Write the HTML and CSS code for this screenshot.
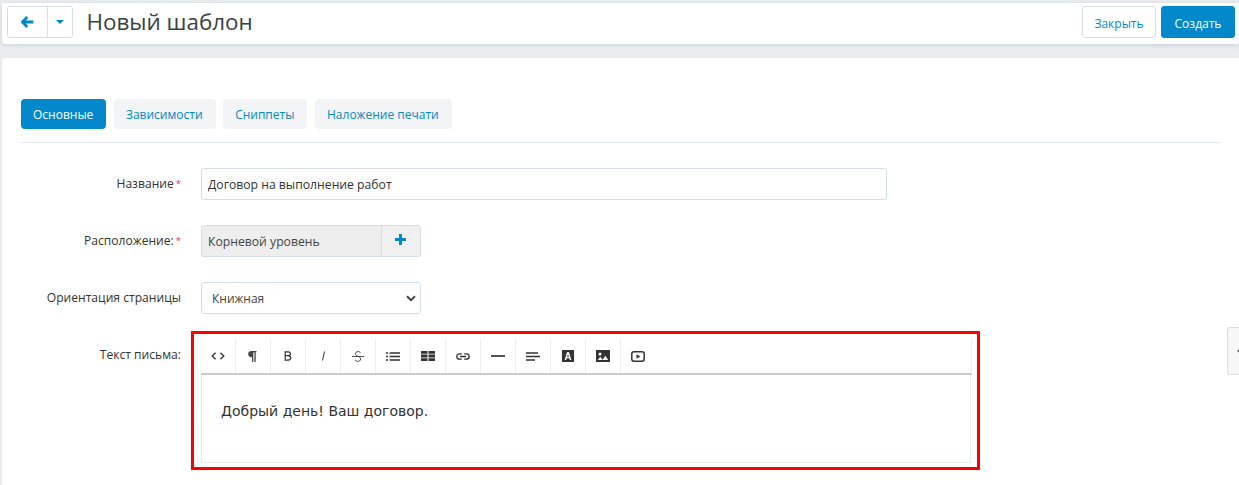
FILE: index.html
```html
<!DOCTYPE html>
<html lang="ru">
<head>
<meta charset="utf-8">
<title>Новый шаблон</title>
<link rel="stylesheet" href="styles.css">
</head>
<body>
<header class="topbar">
  <div class="back-group">
    <button class="back-btn back-main" type="button" aria-label="Назад">
      <svg width="13" height="12" viewBox="0 0 13 12"><path d="M6.200 1 1.400 6l4.800 5M2 6h10.400" fill="none" stroke="#0388cc" stroke-width="2.800"/></svg>
    </button>
    <button class="back-btn back-caret" type="button" aria-label="Ещё">
      <svg width="8" height="4" viewBox="0 0 8 4"><path d="M0 0h8L4 4z" fill="#0388cc"/></svg>
    </button>
  </div>
  <h1 class="title">Новый шаблон</h1>
  <div class="actions">
    <button class="btn btn-light" type="button">Закрыть</button>
    <button class="btn btn-primary" type="button">Создать</button>
  </div>
</header>

<main class="card">
  <nav class="tabs">
    <a class="tab tab-active">Основные</a>
    <a class="tab">Зависимости</a>
    <a class="tab">Сниппеты</a>
    <a class="tab">Наложение печати</a>
  </nav>

  <form class="form">
    <div class="row">
      <label class="label">Название<span class="req">*</span></label>
      <input class="input input-name" type="text" value="Договор на выполнение работ">
    </div>
    <div class="row">
      <label class="label">Расположение:<span class="req">*</span></label>
      <div class="picker">
        <span class="picker-value">Корневой уровень</span>
        <button class="picker-add" type="button" aria-label="Добавить">
          <svg width="11" height="11" viewBox="0 0 11 11"><path d="M5.500 0v11M0 5.500h11" stroke="#0388cc" stroke-width="3"/></svg>
        </button>
      </div>
    </div>
    <div class="row">
      <label class="label">Ориентация страницы</label>
      <div class="select">
        <span>Книжная</span>
        <svg width="10" height="7" viewBox="0 0 10 7"><path d="M1 1.200 5 5.200l4-4" fill="none" stroke="#444" stroke-width="2"/></svg>
      </div>
    </div>
    <div class="row row-editor">
      <label class="label">Текст письма:</label>
      <div class="editor">
        <div class="toolbar">
          <span class="tool"><svg width="14" height="8" viewBox="0 0 14 8"><path d="M4.600 .8 1.200 4l3.400 3.200M9.400 .8 12.800 4 9.400 7.200" fill="none" stroke="#333" stroke-width="1.300"/></svg></span>
          <span class="tool tool-shift"><svg width="9" height="11" viewBox="0 0 9 11"><path d="M8.500 0H3.300a3.100 3.100 0 0 0 0 6.200H4V11h1.300V1.300h1.100V11h1.300V1.300h.8z" fill="#444"/></svg></span>
          <span class="tool tool-shift"><svg width="8" height="10" viewBox="0 0 8 10"><path d="M1.200 .8h2.900c1.500 0 2.300.8 2.300 2 0 1.100-.8 1.800-2.300 1.900 1.600 0 2.600.8 2.600 2.100 0 1.400-1 2.300-2.600 2.300H1.200zM1.200 4.700h2.900" fill="none" stroke="#333" stroke-width="1.200"/></svg></span>
          <span class="tool"><svg width="5" height="10" viewBox="0 0 5 10"><path d="M3.500 .5 1.500 9.500" stroke="#444" stroke-width="1.100"/></svg></span>
          <span class="tool tool-shift"><svg width="12" height="11" viewBox="0 0 12 11"><path d="M8.600 2C8.200 1 7.200.6 6 .6 4.500.6 3.400 1.400 3.400 2.700c0 1.300 1 1.900 2.600 2.600 1.700.7 2.600 1.300 2.600 2.700 0 1.500-1.100 2.400-2.700 2.400-1.300 0-2.400-.5-2.900-1.500" fill="none" stroke="#444" stroke-width=".9"/><path d="M0 5.500h12" stroke="#444" stroke-width=".9"/></svg></span>
          <span class="tool"><svg width="14" height="9" viewBox="0 0 14 9"><path d="M3.500 1h10.500M3.500 4.500h10.500M3.500 8h10.500" stroke="#333" stroke-width="1.500"/><path d="M0 1h2M0 4.500h2M0 8h2" stroke="#333" stroke-width="1.500"/></svg></span>
          <span class="tool"><svg width="14" height="10" viewBox="0 0 14 10"><path d="M0 0h6.500v2.800H0zM7.500 0H14v2.800H7.500zM0 3.600h6.500v2.800H0zM7.500 3.600H14v2.800H7.500zM0 7.200h6.500V10H0zM7.500 7.200H14V10H7.500z" fill="#333"/></svg></span>
          <span class="tool tool-shift"><svg width="14" height="7" viewBox="0 0 14 7"><path d="M5.800 .8H3.500a2.700 2.700 0 0 0 0 5.400h2.300M8.200 .8h2.300a2.700 2.700 0 0 1 0 5.400H8.200M4 3.500h6" fill="none" stroke="#333" stroke-width="1.300"/></svg></span>
          <span class="tool tool-shift"><svg width="14" height="2" viewBox="0 0 14 2"><path d="M0 1h14" stroke="#333" stroke-width="1.700"/></svg></span>
          <span class="tool"><svg width="14" height="9" viewBox="0 0 14 9"><path d="M0 1h12M0 4.500h14M0 8h9" stroke="#333" stroke-width="1.500"/></svg></span>
          <span class="tool tool-shift"><svg width="12" height="12" viewBox="0 0 12 12"><path fill-rule="evenodd" d="M0 0h12v12H0zM5.100 2 2.600 10h1.600l.5-1.700h2.600l.5 1.700h1.600L6.900 2zM5.100 7l.9-3 .9 3z" fill="#333"/></svg></span>
          <span class="tool"><svg width="14" height="12" viewBox="0 0 14 12"><path fill-rule="evenodd" d="M0 0h14v12H0zM4 2.500a1.500 1.500 0 1 0 0 3 1.500 1.500 0 0 0 0-3zM1.800 10h5L4.300 6.700zM6.500 10h5.700L9.300 5.800z" fill="#333"/></svg></span>
          <span class="tool tool-shift"><svg width="14" height="11" viewBox="0 0 14 11"><rect x=".8" y=".8" width="12.400" height="9.400" rx="2.200" fill="none" stroke="#333" stroke-width="1.500"/><path d="M5.500 3.300v4.400L9.300 5.500z" fill="#333"/></svg></span>
        </div>
        <div class="editor-body">Добрый день! Ваш договор.</div>
      </div>
      <div class="highlight"></div>
    </div>
  </form>
  <div class="side-toggle"><svg width="4" height="6" viewBox="0 0 4 6"><path d="M4 0v6L0 3z" fill="#555"/></svg></div>
</main>
</body>
</html>
```
FILE: styles.css
```css
* { box-sizing: border-box; }
html, body { margin: 0; height: 485px; overflow: hidden; }
body {
  background: #e9edf0;
  font-family: "Open Sans", "Liberation Sans", sans-serif;
  font-size: 12px;
  color: #333;
  padding: 3px 0 0 2px;
}
button { font-family: inherit; cursor: pointer; }

.topbar {
  height: 41px;
  background: #fff;
  border-radius: 0 0 3px 3px;
  box-shadow: 0 1px 5px rgba(0,0,0,.12);
  display: flex;
  align-items: center;
  padding: 0 4px 4px 5px;
}
.back-group { display: flex; height: 32px; border: 1px solid #d3dfe8; border-radius: 3px; }
.back-btn { background: #fff; border: 0; padding: 0; display: flex; align-items: center; justify-content: center; border-radius: 3px; }
.back-main { width: 40px; border-right: 1px solid #d3dfe8; border-radius: 3px 0 0 3px; }
.back-caret { width: 24px; }
.title { margin: 0 0 0 13.500px; font-size: 22.400px; font-weight: 400; line-height: 32px; color: #3b3f44; }
.actions { margin-left: auto; display: flex; gap: 5px; }
.btn { height: 32px; border-radius: 3px; font-size: 12px; padding: 4px 0 0; }
.btn-light { width: 74px; background: #fff; border: 1px solid #d3dfe8; color: #0388cc; }
.btn-primary { width: 74px; background: #0388cc; border: 1px solid #0388cc; color: #fff; }

.card {
  position: relative;
  margin-top: 14px;
  height: 430px;
  background: #fff;
  border-radius: 3px 0 0 0;
  padding: 41px 18px 0 19px;
}
.tabs { display: flex; gap: 7.600px; height: 44px; border-bottom: 1px solid #e3e8ee; align-items: flex-start; }
.tab { height: 30px; line-height: 32px; padding: 0 13px 0 12px; border-radius: 4px; background: #f3f4f5; color: #0388cc; font-size: 12px; }
.tab-active { background: #0388cc; color: #fff; }

.form { display: flex; flex-direction: column; padding-top: 25px; gap: 25px; }
.row { display: flex; gap: 20px; position: relative; align-items: flex-start; }
.label { width: 160px; height: 32px; text-align: right; line-height: 31px; font-size: 12.100px; color: #333; }
.req { color: #f5304a; margin-left: 2px; font-size: 9.500px; line-height: 0; vertical-align: 1.500px; }
.input { height: 32px; width: 686px; border: 1px solid #d3dfe8; border-radius: 3px; padding: 0 6px; font: 12.200px "Open Sans", sans-serif; color: #333; background: #fff; outline: 0; }
.picker { display: flex; width: 220px; height: 32px; border: 1px solid #d3dfe8; border-radius: 3px; background: #eee; }
.picker-value { flex: 1; line-height: 31px; padding-left: 6px; font-size: 12.200px; color: #444; }
.picker-add { width: 39px; border: 0; border-left: 1px solid #d3dfe8; background: #f0f0f0; display: flex; align-items: center; justify-content: center; padding: 0 2px 3px 0; border-radius: 0 3px 3px 0; }
.select { display: flex; align-items: center; justify-content: space-between; width: 220px; height: 32px; border: 1px solid #d3dfe8; border-radius: 3px; padding: 0 4px 0 10px; background: #fff; font-size: 12px; color: #444; }

.editor { width: 771px; }
.toolbar { display: flex; height: 36px; border-bottom: 2px solid #cbcbcb; border-right: 1px solid #eee; }
.tool { width: 35px; display: flex; align-items: center; justify-content: center; border-right: 1px solid #eee; }
.tool-shift { padding-right: 1px; }
.tool:nth-child(n+13) { border-right: 0; }
.editor-body { height: 88px; width: 770px; border: 1px solid #e9ecec; border-top: 0; padding: 26px 19px 0; font-family: "DejaVu Sans", sans-serif; font-size: 14px; line-height: 20px; color: #333; }
.highlight { position: absolute; left: 170px; top: -8px; width: 789px; height: 139px; border: 3px solid #f00; pointer-events: none; }
.side-toggle { position: absolute; right: 0; top: 269px; width: 12px; height: 48px; background: #f7f7f7; border: 1px solid #ddd; border-right: 0; border-radius: 3px 0 0 3px; display: flex; align-items: center; padding-left: 9px; }
```
